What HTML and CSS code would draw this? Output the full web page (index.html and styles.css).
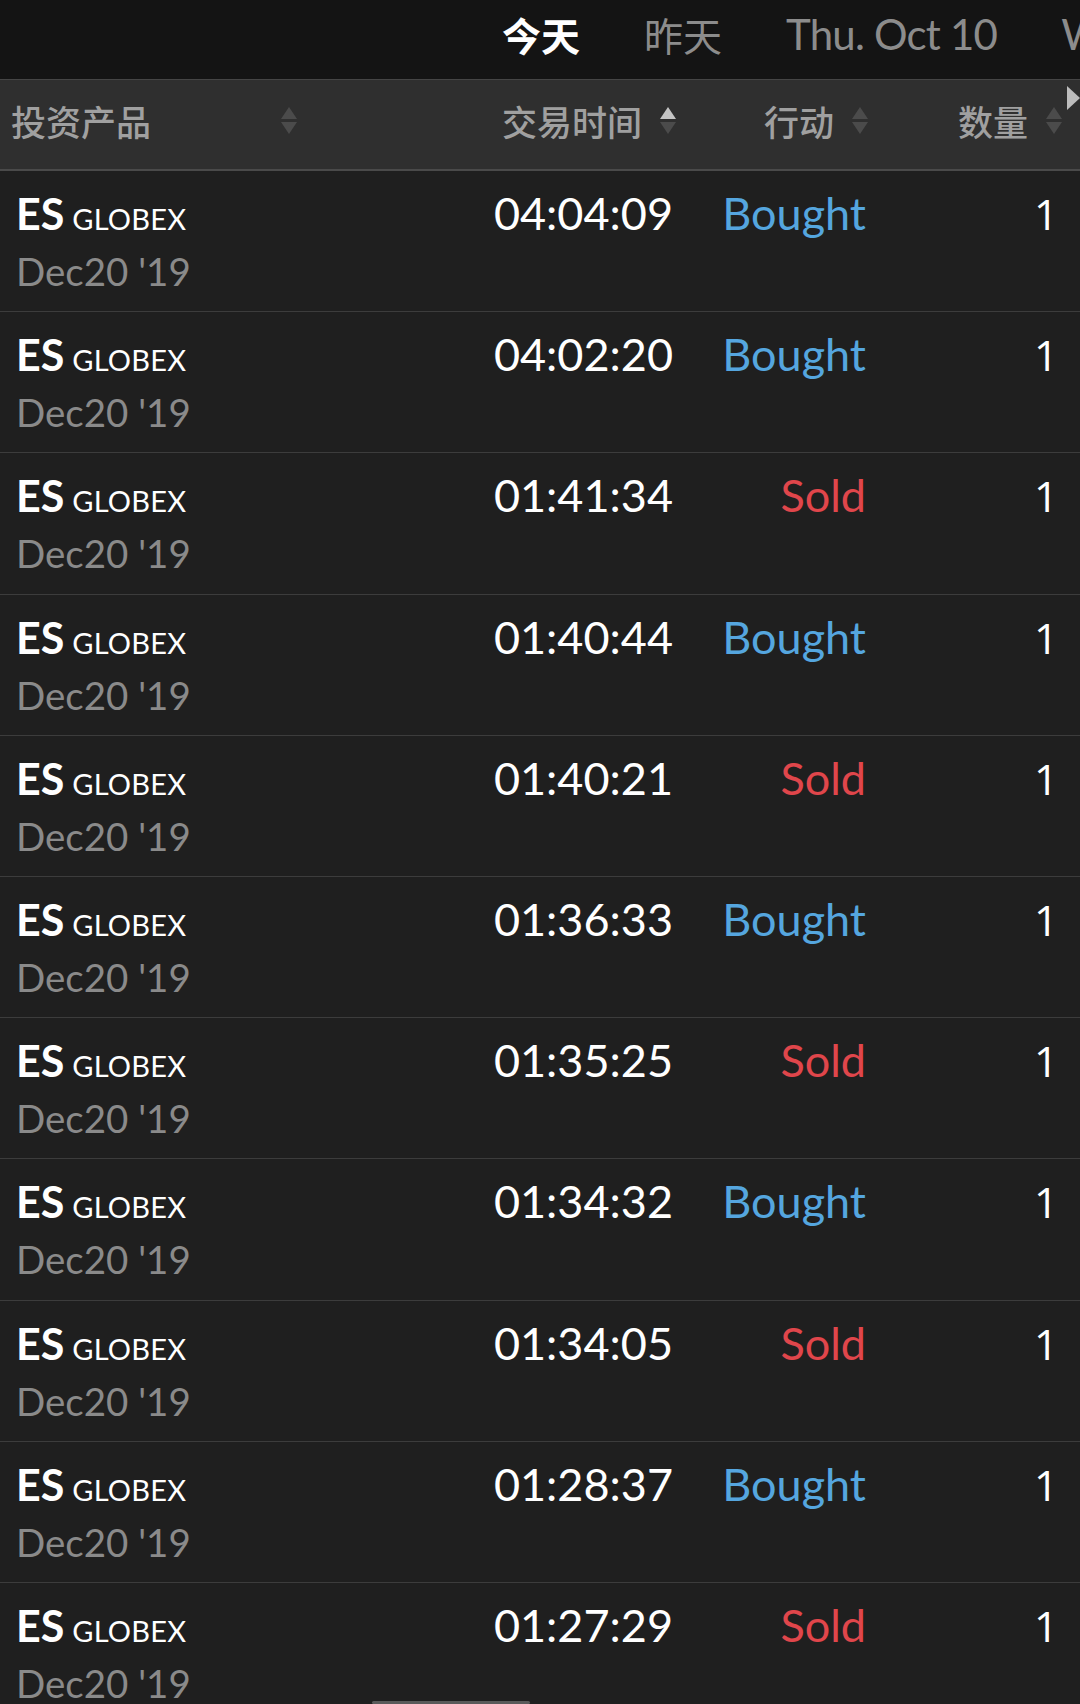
FILE: index.html
```html
<!DOCTYPE html>
<html lang="zh">
<head>
<meta charset="utf-8">
<title>Trades</title>
<link rel="stylesheet" href="styles.css">
</head>
<body>
<div class="app">
  <nav class="tabs">
    <span class="tab active">今天</span>
    <span class="tab cjk">昨天</span>
    <span class="tab">Thu. Oct 10</span>
    <span class="tab">Wed. Oct 9</span>
  </nav>
  <div class="head">
    <div class="hcell first"><span>投资产品</span><svg class="sort" viewBox="0 0 18 30"><path class="up" d="M9 1 L17 13 L1 13 Z"/><path class="down" d="M1 16 L17 16 L9 28 Z"/></svg></div>
    <div class="hcell"><span>交易时间</span><svg class="sort" viewBox="0 0 18 30"><path class="up on" d="M9 1 L17 13 L1 13 Z"/><path class="down" d="M1 16 L17 16 L9 28 Z"/></svg></div>
    <div class="hcell"><span>行动</span><svg class="sort" viewBox="0 0 18 30"><path class="up" d="M9 1 L17 13 L1 13 Z"/><path class="down" d="M1 16 L17 16 L9 28 Z"/></svg></div>
    <div class="hcell"><span>数量</span><svg class="sort" viewBox="0 0 18 30"><path class="up" d="M9 1 L17 13 L1 13 Z"/><path class="down" d="M1 16 L17 16 L9 28 Z"/></svg></div>
    <svg class="more" viewBox="0 0 13 24"><path d="M0 0 L13 12 L0 24 Z"/></svg>
  </div>
  <div class="rows">
    <div class="row"><div class="prod"><div class="l1"><b>ES</b> <span class="ex">GLOBEX</span></div><div class="l2">Dec20 '19</div></div><div class="time">04:04:09</div><div class="act buy">Bought</div><div class="qty">1</div></div>
    <div class="row"><div class="prod"><div class="l1"><b>ES</b> <span class="ex">GLOBEX</span></div><div class="l2">Dec20 '19</div></div><div class="time">04:02:20</div><div class="act buy">Bought</div><div class="qty">1</div></div>
    <div class="row"><div class="prod"><div class="l1"><b>ES</b> <span class="ex">GLOBEX</span></div><div class="l2">Dec20 '19</div></div><div class="time">01:41:34</div><div class="act sell">Sold</div><div class="qty">1</div></div>
    <div class="row"><div class="prod"><div class="l1"><b>ES</b> <span class="ex">GLOBEX</span></div><div class="l2">Dec20 '19</div></div><div class="time">01:40:44</div><div class="act buy">Bought</div><div class="qty">1</div></div>
    <div class="row"><div class="prod"><div class="l1"><b>ES</b> <span class="ex">GLOBEX</span></div><div class="l2">Dec20 '19</div></div><div class="time">01:40:21</div><div class="act sell">Sold</div><div class="qty">1</div></div>
    <div class="row"><div class="prod"><div class="l1"><b>ES</b> <span class="ex">GLOBEX</span></div><div class="l2">Dec20 '19</div></div><div class="time">01:36:33</div><div class="act buy">Bought</div><div class="qty">1</div></div>
    <div class="row"><div class="prod"><div class="l1"><b>ES</b> <span class="ex">GLOBEX</span></div><div class="l2">Dec20 '19</div></div><div class="time">01:35:25</div><div class="act sell">Sold</div><div class="qty">1</div></div>
    <div class="row"><div class="prod"><div class="l1"><b>ES</b> <span class="ex">GLOBEX</span></div><div class="l2">Dec20 '19</div></div><div class="time">01:34:32</div><div class="act buy">Bought</div><div class="qty">1</div></div>
    <div class="row"><div class="prod"><div class="l1"><b>ES</b> <span class="ex">GLOBEX</span></div><div class="l2">Dec20 '19</div></div><div class="time">01:34:05</div><div class="act sell">Sold</div><div class="qty">1</div></div>
    <div class="row"><div class="prod"><div class="l1"><b>ES</b> <span class="ex">GLOBEX</span></div><div class="l2">Dec20 '19</div></div><div class="time">01:28:37</div><div class="act buy">Bought</div><div class="qty">1</div></div>
    <div class="row"><div class="prod"><div class="l1"><b>ES</b> <span class="ex">GLOBEX</span></div><div class="l2">Dec20 '19</div></div><div class="time">01:27:29</div><div class="act sell">Sold</div><div class="qty">1</div></div>
  </div>
  <div class="scrollbar"></div>
</div>
</body>
</html>
```
FILE: styles.css
```css
* { box-sizing: border-box; }
html, body { margin: 0; padding: 0; background: #1f1f1f; }
.app {
  width: 1080px;
  height: 1704px;
  overflow: hidden;
  position: relative;
  font-family: Lato, "Noto Sans CJK SC", sans-serif;
  background: #1f1f1f;
}
.tabs {
  height: 79px;
  background: #141414;
  display: flex;
  align-items: center;
  gap: 64px;
  padding: 0 0 12px 502px;
  white-space: nowrap;
  overflow: hidden;
}
.tab {
  font-family: Lato, "Noto Sans CJK SC", sans-serif;
  font-size: 42px;
  color: #8c8c8c;
  letter-spacing: -0.8px;
  flex: none;
}
.tab.cjk { font-size: 39px; letter-spacing: 0; }
.tab.active { color: #ffffff; font-weight: 700; font-size: 39px; letter-spacing: 0; }
.head {
  position: relative;
  height: 92px;
  background: #2f2f2f;
  border-top: 1px solid #454545;
  border-bottom: 2px solid #4a4a4a;
  display: grid;
  grid-template-columns: 300px 380px 192px 194px 14px;
  align-items: center;
  padding-bottom: 8px;
}
.hcell {
  display: flex;
  align-items: center;
  justify-content: flex-end;
  gap: 17px;
  padding-right: 3px;
  font-family: "Noto Sans CJK SC", sans-serif;
  font-size: 35px;
  font-weight: 500;
  color: #a0a0a0;
}
.hcell.first { justify-content: space-between; padding-left: 11px; padding-right: 2px; }
.sort { width: 18px; height: 30px; flex: none; }
.sort path { fill: #4b4b4b; }
.sort path.on { fill: #c4c4c4; }
.more { position: absolute; right: 0; top: 6px; width: 13px; height: 24px; }
.more path { fill: #bdbdbd; }
.row {
  height: 141.2px;
  border-bottom: 1.5px solid #3c3c3c;
  display: grid;
  grid-template-columns: 300px 380px 192px 194px 14px;
  padding-top: 15px;
  color: #ffffff;
}
.prod { padding-left: 16px; white-space: nowrap; }
.l1 { font-size: 43px; line-height: 55px; word-spacing: -3px; }
.l1 b { font-weight: 700; }
.ex { font-size: 29px; letter-spacing: 0.2px; }
.l2 { font-size: 38.5px; line-height: 50px; color: #8a8a8a; }
.time, .act, .qty { font-size: 45px; line-height: 55px; text-align: right; }
.time { padding-right: 7px; }
.act { padding-right: 6px; }
.qty { padding-right: 8px; font-family: "Open Sans", sans-serif; font-size: 42px; }
.buy { color: #55a6df; }
.sell { color: #e0464b; }
.scrollbar {
  position: absolute;
  left: 372px;
  bottom: 0;
  width: 158px;
  height: 3px;
  background: #5a5a5a;
  border-radius: 2px;
}
```
